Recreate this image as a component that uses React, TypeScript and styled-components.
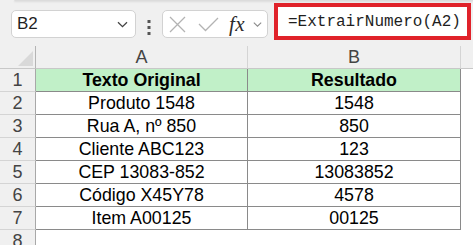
import React from "react";
import styled, { createGlobalStyle } from "styled-components";

const Global = createGlobalStyle`
  html, body { margin: 0; padding: 0; }
  body {
    background: #f0f0f0;
    font-family: "Liberation Sans", Arial, sans-serif;
    width: 473px;
    height: 245px;
    overflow: hidden;
  }
`;

const Page = styled.div`
  width: 473px;
  height: 245px;
  display: flex;
  flex-direction: column;
  background: #f0f0f0;
`;

const RibbonEdge = styled.div`
  height: 2px;
  margin-left: 14px;
  background: #ffffff;
  border-bottom: 1px solid #dcdcdc;
  border-bottom-left-radius: 4px;
  box-shadow: 0 1px 2px rgba(0, 0, 0, 0.12);
`;

const FormulaBar = styled.div`
  height: 45px;
  display: flex;
  align-items: flex-start;
  padding-left: 11px;
  box-sizing: border-box;
`;

const NameBox = styled.div`
  margin-top: 9px;
  width: 125px;
  height: 28px;
  box-sizing: border-box;
  background: #ffffff;
  border: 1px solid #d2d2d2;
  border-radius: 5px;
  display: flex;
  align-items: center;
  justify-content: space-between;
  padding: 0 7px 0 5px;
  font-size: 17px;
  color: #1f1f1f;
`;

const Grip = styled.div`
  width: 26px;
  height: 45px;
  display: flex;
  align-items: center;
  justify-content: center;
  margin-top: 4px;
`;

const FxBox = styled.div`
  margin-top: 9px;
  width: 106px;
  height: 28px;
  box-sizing: border-box;
  background: #ffffff;
  border: 1px solid #d2d2d2;
  border-radius: 5px;
  display: flex;
  align-items: center;
  padding-left: 6px;
  gap: 12px;
`;

const Fx = styled.span`
  font-family: "Liberation Serif", "Times New Roman", serif;
  font-style: italic;
  font-size: 21px;
  color: #2b2b2b;
  margin-left: -2px;
  display: flex;
  align-items: center;
  gap: 8px;
  letter-spacing: 0.5px;
`;

const FormulaInput = styled.div`
  margin-top: 2px;
  margin-left: 6px;
  width: 197px;
  height: 37px;
  box-sizing: border-box;
  background: #ffffff;
  border: 4px solid #e0222a;
  display: flex;
  align-items: center;
  padding-left: 10px;
  font-family: "Liberation Mono", "Courier New", monospace;
  font-size: 16px;
  color: #1e1e1e;
  white-space: nowrap;
`;

const Sheet = styled.div`
  display: grid;
  grid-template-columns: 36px 212px 213px 12px;
  grid-auto-rows: 23px;
`;

const Corner = styled.div`
  background: #f0f0f0;
  border-right: 1px solid #b4b4b4;
  border-bottom: 1px solid #c8c8c8;
  box-sizing: border-box;
  display: flex;
  align-items: flex-end;
  justify-content: flex-end;
  padding: 0 2px 2px 0;
`;

const Triangle = styled.div`
  width: 0;
  height: 0;
  border-left: 15px solid transparent;
  border-bottom: 15px solid #d9d9d9;
`;

const ColHead = styled.div<{ $last?: boolean }>`
  background: #f0f0f0;
  border-right: ${(p) => (p.$last ? "none" : "1px solid #d4d4d4")};
  border-bottom: 1px solid #c8c8c8;
  box-sizing: border-box;
  display: flex;
  align-items: center;
  justify-content: center;
  font-size: 18px;
  color: #444444;
`;

const RowHead = styled.div`
  background: #f0f0f0;
  border-right: 1px solid #a8a8a8;
  border-bottom: 1px solid #d4d4d4;
  box-sizing: border-box;
  display: flex;
  align-items: center;
  justify-content: center;
  font-size: 18px;
  color: #444444;
`;

const Cell = styled.div<{ $head?: boolean; $table?: boolean }>`
  background: ${(p) => (p.$head ? "#c1f0c8" : "#ffffff")};
  border-right: ${(p) => (p.$table ? "1px solid #8a8a8a" : "none")};
  border-bottom: ${(p) => (p.$table ? "1px solid #8a8a8a" : "none")};
  box-sizing: border-box;
  display: flex;
  align-items: center;
  justify-content: center;
  font-size: 17.8px;
  font-weight: ${(p) => (p.$head ? 700 : 400)};
  color: #000000;
  white-space: nowrap;
`;

const Chevron = ({ color = "#444", w = 11 }: { color?: string; w?: number }) => (
  <svg width={w} height="7" viewBox="0 0 11 7" fill="none">
    <path d="M1 1.2 L5.5 5.6 L10 1.2" stroke={color} strokeWidth="1.3" />
  </svg>
);

const rows: [string, string][] = [
  ["Texto Original", "Resultado"],
  ["Produto 1548", "1548"],
  ["Rua A, nº 850", "850"],
  ["Cliente ABC123", "123"],
  ["CEP 13083-852", "13083852"],
  ["Código X45Y78", "4578"],
  ["Item A00125", "00125"],
];

export default function App() {
  return (
    <Page>
      <Global />
      <RibbonEdge />
      <FormulaBar>
        <NameBox>
          <span>B2</span>
          <Chevron />
        </NameBox>
        <Grip>
          <svg width="4" height="15" viewBox="0 0 4 15">
            <rect x="0.5" y="0" width="3" height="3" fill="#555" />
            <rect x="0.5" y="6" width="3" height="3" fill="#555" />
            <rect x="0.5" y="12" width="3" height="3" fill="#555" />
          </svg>
        </Grip>
        <FxBox>
          <svg width="17" height="17" viewBox="0 0 17 17" fill="none">
            <path d="M1 1 L16 16 M16 1 L1 16" stroke="#b3b3b3" strokeWidth="1.3" />
          </svg>
          <svg width="21" height="15" viewBox="0 0 21 15" fill="none">
            <path d="M1 7 L7.5 13.5 L20 1" stroke="#b3b3b3" strokeWidth="1.3" />
          </svg>
          <Fx>
            fx
            <Chevron color="#8a8a8a" w={9} />
          </Fx>
        </FxBox>
        <FormulaInput>=ExtrairNumero(A2)</FormulaInput>
      </FormulaBar>
      <Sheet>
        <Corner>
          <Triangle />
        </Corner>
        <ColHead>A</ColHead>
        <ColHead>B</ColHead>
        <ColHead $last />
        {rows.map((r, i) => (
          <React.Fragment key={i}>
            <RowHead>{i + 1}</RowHead>
            <Cell $table $head={i === 0}>{r[0]}</Cell>
            <Cell $table $head={i === 0}>{r[1]}</Cell>
            <Cell />
          </React.Fragment>
        ))}
        <RowHead>8</RowHead>
        <Cell />
        <Cell />
        <Cell />
      </Sheet>
    </Page>
  );
}
